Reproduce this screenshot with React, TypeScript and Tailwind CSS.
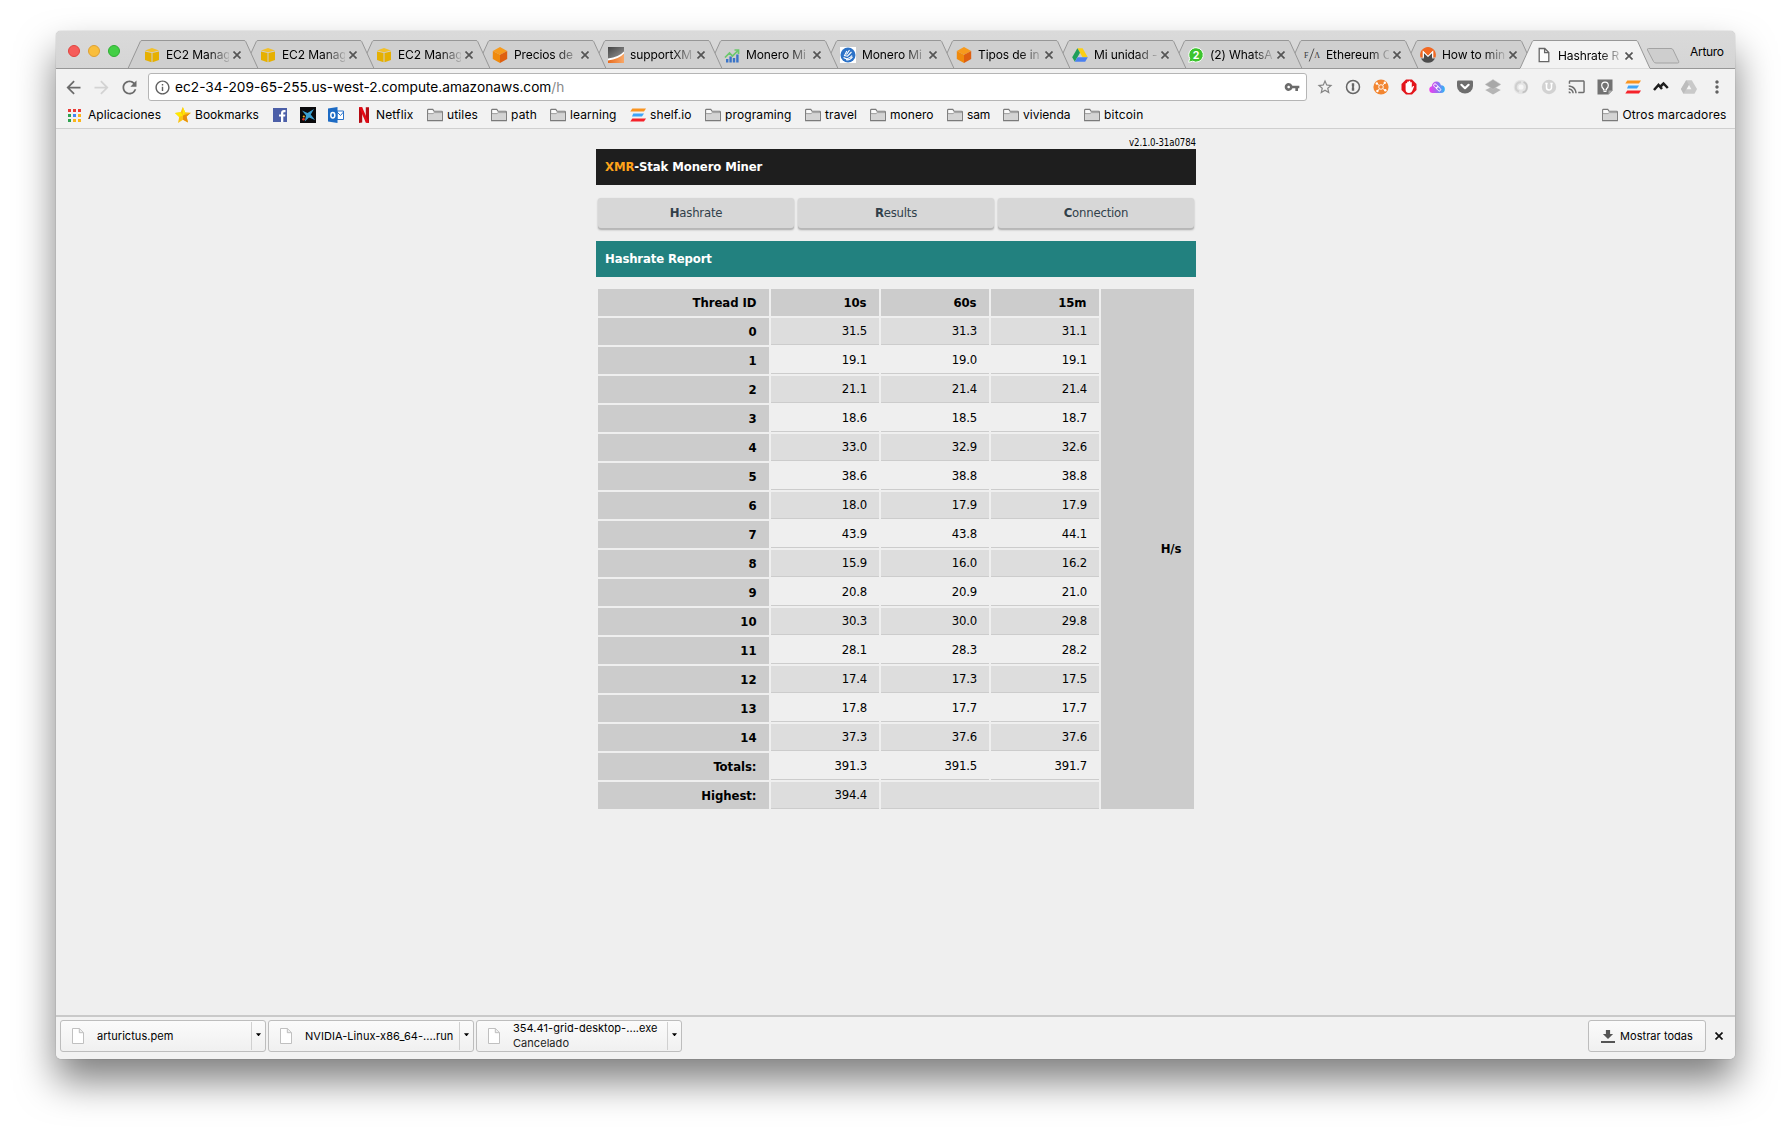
import type { ReactNode } from "react";
import {
  MdArrowBack,
  MdArrowForward,
  MdCast,
  MdInfoOutline,
  MdMoreVert,
  MdRefresh,
  MdStarBorder,
  MdVpnKey,
} from "react-icons/md";

/* ---------- favicons ---------- */

const AwsYellow = () => (
  <svg viewBox="0 0 16 16" className="size-4">
    <path d="M1 3.6 8 .9l7 2.7-7 1.7z" fill="#f2c02a" />
    <path d="M1 4.4 7.5 6v9.3L1 13z" fill="#e6b000" />
    <path d="M15 4.4 8.5 6v9.3L15 13z" fill="#e6b000" />
  </svg>
);

const AwsOrange = () => (
  <svg viewBox="0 0 16 16" className="size-4">
    <path d="M8 0l7.2 3.9L8 7.8.8 3.9z" fill="#f79a1c" />
    <path d="M.8 3.9 8 7.8V16L.8 12z" fill="#f08a0c" />
    <path d="M15.2 3.9 8 7.8V16l7.2-4z" fill="#df6010" />
  </svg>
);

const SupportXmr = () => (
  <svg viewBox="0 0 16 16" className="size-4">
    <defs>
      <linearGradient id="sx" x1="0" y1="0" x2="1" y2="1">
        <stop offset="0" stopColor="#444" />
        <stop offset="1" stopColor="#999" />
      </linearGradient>
      <linearGradient id="so" x1="0" y1="0" x2="1" y2="0">
        <stop offset="0" stopColor="#e86a1c" />
        <stop offset="1" stopColor="#f8a868" />
      </linearGradient>
    </defs>
    <path d="M0 0h16v16H0z" fill="#fff" />
    <path d="M0 0h16v4.500Q11 10 0 11.500z" fill="url(#sx)" />
    <path d="M16 6.500V16H0v-2.600Q11 12 16 6.500z" fill="url(#so)" />
  </svg>
);

const ChartIcon = () => (
  <svg viewBox="0 0 16 16" className="size-4">
    <path d="M2 12h2.400v3.500H2zM5.400 9.500h2.400v6H5.400zM8.800 11h2.400v4.500H8.800zM12.200 7.500h2.400v8h-2.400z" fill="#3a74c8" />
    <path d="M1 10.500 5.500 6l3 3L14 3.500M10.500 3H14.500v4" fill="none" stroke="#6cc86c" strokeWidth="1.700" />
  </svg>
);

const BlueCircle = () => (
  <svg viewBox="0 0 16 16" className="size-4">
    <path d="M0 0h16v16H0z" fill="#fff" />
    <circle cx="8" cy="8" r="7.500" fill="#2c72c7" />
    <path d="M9.500 3 6.500 7.500M6.800 4 4.500 8.500l3 .7L11.500 5M3.500 10.500c3 2 6 1.500 8.500-2M6 12.800c3 .5 5-.5 6.500-3" fill="none" stroke="#fff" strokeWidth="1.100" />
  </svg>
);

const DriveIcon = () => (
  <svg viewBox="0 0 16 16" className="size-4">
    <path d="M5.400 1.300h5.200l5.200 8.900h-5.200z" fill="#fbcf14" />
    <path d="M5.400 1.300 8 5.800 2.800 14.700.2 10.200z" fill="#1f9f5b" />
    <path d="M5.500 10.200h10.300l-2.600 4.500H2.800z" fill="#4a80f0" />
  </svg>
);

const WhatsApp = () => (
  <svg viewBox="0 0 16 16" className="size-4">
    <path d="M8 .7a7.200 7.200 0 1 1-3.400 13.500L.6 15.300l1.100-3.900A7.200 7.200 0 0 1 8 .7z" fill="#3cc42e" stroke="#fff" strokeWidth="1" />
    <text x="8" y="12" textAnchor="middle" fontSize="10.500" fontWeight="bold" fill="#fff" fontFamily="Inter, sans-serif">
      2
    </text>
  </svg>
);

const FaIcon = () => (
  <svg viewBox="0 0 16 16" className="size-4 overflow-visible">
    <text x="0" y="10.500" fontSize="8" fill="#333" fontFamily="Liberation Serif, serif">F</text>
    <text x="10.200" y="10.500" fontSize="8" fill="#333" fontFamily="Liberation Serif, serif">Λ</text>
    <path d="M5.200 14.500 10 1.500" stroke="#555" strokeWidth="1" />
  </svg>
);

const MoneroIcon = () => (
  <svg viewBox="0 0 16 16" className="size-4">
    <path d="M1 11.400h2.900V5.700L8 9.800l4.100-4.100v5.700H15A7.900 7.900 0 0 1 1 11.400z" fill="#4c4c4c" />
    <path d="M8 .1a7.900 7.900 0 0 0-7.500 10.300h2.300V3.500L8 8.700l5.200-5.200v6.900h2.300A7.900 7.900 0 0 0 8 .1z" fill="#f26822" />
    <path d="M2.800 10.400V3.500L8 8.700l5.200-5.200v6.900h-1.100V6L8 10.100 3.900 6v4.400z" fill="#fff" />
  </svg>
);

const PageIcon = () => (
  <svg viewBox="0 0 16 16" className="size-4">
    <path d="M3.200 1.500h5.600l4 4v9.200H3.200z M8.600 1.700v4h4" fill="#fdfdfd" stroke="#666" strokeWidth="1.300" />
  </svg>
);

/* ---------- tab strip ---------- */

type Tab = { icon: ReactNode; label: string; z: string; active?: boolean };

const tabs: Tab[] = [
  { icon: <AwsYellow />, label: "EC2 Manag", z: "z-[12]" },
  { icon: <AwsYellow />, label: "EC2 Manag", z: "z-[11]" },
  { icon: <AwsYellow />, label: "EC2 Manag", z: "z-[10]" },
  { icon: <AwsOrange />, label: "Precios de", z: "z-[9]" },
  { icon: <SupportXmr />, label: "supportXM", z: "z-[8]" },
  { icon: <ChartIcon />, label: "Monero Mi", z: "z-[7]" },
  { icon: <BlueCircle />, label: "Monero Mi", z: "z-[6]" },
  { icon: <AwsOrange />, label: "Tipos de in", z: "z-[5]" },
  { icon: <DriveIcon />, label: "Mi unidad -", z: "z-[4]" },
  { icon: <WhatsApp />, label: "(2) WhatsA", z: "z-[3]" },
  { icon: <FaIcon />, label: "Ethereum C", z: "z-[2]" },
  { icon: <MoneroIcon />, label: "How to min", z: "z-[1]" },
  { icon: <PageIcon />, label: "Hashrate R", z: "z-20", active: true },
];

function TabItem({ icon, label, z, active }: Tab) {
  return (
    <div className={`relative -mr-[14px] flex w-[130px] shrink-0 items-center pl-4 ${z} ${active ? "-mb-px h-[29px]" : "h-7"}`}>
      <svg viewBox="0 0 130 29" className="absolute top-0 left-0 h-[29px] w-[130px] overflow-visible">
        <path
          d="M0 28.500 12.300 1.500Q12.800 .5 14 .5H116Q117.200 .5 117.700 1.500L130 28.500"
          fill={active ? "#f2f2f2" : "#cfcfcf"}
          stroke="#979797"
        />
        {active ? <path d="M0 29h130" stroke="#f2f2f2" strokeWidth="1" /> : <path d="M-1 28.500h132" stroke="#979797" />}
      </svg>
      <span className="relative mt-px flex">{icon}</span>
      <span className="relative mt-0.5 ml-1.5 w-[63px] overflow-hidden text-[12px] leading-4 tracking-[-0.100px] whitespace-nowrap text-black [mask-image:linear-gradient(to_right,#000_42px,transparent_66px)]">
        {label}
      </span>
      <svg viewBox="0 0 8 8" className="relative mt-0.5 ml-1 size-2">
        <path d="M.5.5l7 7M7.500.5l-7 7" stroke="#555" strokeWidth="1.700" />
      </svg>
    </div>
  );
}

function TabStrip() {
  return (
    <div className="flex h-[38px] shrink-0 items-end border-b border-[#979797] bg-gradient-to-b from-[#dadada] to-[#d5d5d5]">
      <div className="flex gap-2 self-start pt-3.5 pl-3">
        <span className="size-3 rounded-full border border-[#e0443e] bg-[#f65c5a]" />
        <span className="size-3 rounded-full border border-[#dea032] bg-[#f9be3c]" />
        <span className="size-3 rounded-full border border-[#2fae33] bg-[#43cf45]" />
      </div>
      <div className="ml-2 flex items-end">
        {tabs.map((tab, i) => (
          <TabItem key={i} {...tab} />
        ))}
      </div>
      <svg viewBox="0 0 36 18" className="mb-[3px] ml-[10px] h-[18px] w-9 shrink-0">
        <path d="M2.500 1.500h22.500q1.500 0 2.200 1.500l5.500 11.500q.5 1.500-1 1.500H10q-1.800 0-2.500-1.500L1.500 3Q1 1.500 2.500 1.500z" fill="#cecece" stroke="#a3a3a3" />
      </svg>
      <span className="mb-2 ml-2 text-[12px] leading-4 tracking-[-0.300px] text-black">Arturo</span>
    </div>
  );
}

/* ---------- toolbar ---------- */

const OnePassword = () => (
  <svg viewBox="0 0 16 16" className="size-4">
    <circle cx="8" cy="8" r="6.500" fill="none" stroke="#666" strokeWidth="1.500" />
    <path d="M6.800 4.300h2.400v3l-.5.7.5.7v3H6.800v-3l.5-.7-.5-.7z" fill="#666" />
  </svg>
);

const OrangeNet = () => (
  <svg viewBox="0 0 16 16" className="size-4">
    <circle cx="8" cy="8" r="7.600" fill="#f28530" />
    <path d="M4 4.500 6.300 6.600M11.700 4 9.600 6.300M4.500 12 6.500 9.700M12.200 11.300 9.700 9.500" stroke="#fff" strokeWidth="1" />
    <g fill="#fff">
      <circle cx="3.800" cy="4.500" r="1.200" />
      <circle cx="11.800" cy="3.800" r="1.200" />
      <circle cx="4.400" cy="12" r="1.200" />
      <circle cx="12.300" cy="11.300" r="1.200" />
    </g>
    <circle cx="8" cy="8" r="2.300" fill="#f28530" stroke="#fff" strokeWidth=".9" />
  </svg>
);

const AdBlock = () => (
  <svg viewBox="0 0 16 16" className="size-4">
    <path d="M5 .5h6L15.500 5v6L11 15.500H5L.5 11V5z" fill="#e3151b" />
    <path d="M4.600 9V4.600a.8.8 0 0 1 1.500 0V3.200a.8.8 0 0 1 1.600 0v-.6a.8.8 0 0 1 1.600 0v.8a.8.8 0 0 1 1.500.1v5.200l1-1.500c.5-.6 1.500-.1 1.200.6L11.200 12c-.6 1.300-1.500 2-3.200 2-2.400 0-3.400-1.500-3.400-3.500z" fill="#fff" />
  </svg>
);

const CloudLink = () => (
  <svg viewBox="0 0 16 16" className="size-4">
    <defs>
      <linearGradient id="cl" x1="0" y1="0" x2="1" y2="0">
        <stop offset="0" stopColor="#f03cf0" />
        <stop offset=".5" stopColor="#a16cf0" />
        <stop offset="1" stopColor="#28b8f6" />
      </linearGradient>
    </defs>
    <path d="M3.500 14a3.400 3.400 0 0 1-.6-6.700A4.600 4.600 0 0 1 7.500 2.500a4.700 4.700 0 0 1 4.400 3.700A3.900 3.900 0 0 1 12 14z" fill="url(#cl)" />
    <g fill="none" stroke="#fff" strokeWidth=".9">
      <rect x="4.300" y="5.600" width="5" height="2.800" rx="1.400" transform="rotate(45 6.800 7)" />
      <rect x="7" y="8.400" width="5" height="2.800" rx="1.400" transform="rotate(45 9.500 9.800)" />
    </g>
  </svg>
);

const Pocket = () => (
  <svg viewBox="0 0 16 16" className="size-4">
    <path d="M1.300 1.500h13.400q1.300 0 1.300 1.300V7A8 7.500 0 0 1 0 7V2.800Q0 1.500 1.300 1.500z" fill="#6e6e6e" />
    <path d="M4.400 5.800 8 9.200l3.600-3.400" fill="none" stroke="#fff" strokeWidth="2.200" strokeLinecap="round" strokeLinejoin="round" />
  </svg>
);

const Layers = () => (
  <svg viewBox="0 0 16 16" className="size-4">
    <path d="M8 7.500 15.800 11 8 15.500.2 11z" fill="#b5b5b5" />
    <path d="M8 .5 15.800 5.400 8 10.300.2 5.400z" fill="#a8a8a8" stroke="#c4c4c4" strokeWidth=".5" />
  </svg>
);

const Swirl = () => (
  <svg viewBox="0 0 16 16" className="size-4">
    <circle cx="8" cy="8" r="7.300" fill="#e4e4e4" />
    <path d="M8 3.200A4.800 4.800 0 0 0 6 12.500" fill="none" stroke="#cfcfcf" strokeWidth="2" />
    <path d="M9.500 13.500A5.500 5.500 0 0 0 10.500 3" fill="none" stroke="#c2c2c2" strokeWidth="1.700" />
    <circle cx="8" cy="8" r="2.600" fill="#f6f6f6" />
  </svg>
);

const UCircle = () => (
  <svg viewBox="0 0 16 16" className="size-4">
    <circle cx="8" cy="8" r="7.200" fill="#d2d2d2" />
    <path d="M5.500 4.500v4a2.500 2.500 0 0 0 5 0v-4M4.300 4.500h2.400M9.300 4.500h2.400" fill="none" stroke="#fff" strokeWidth="1.500" />
  </svg>
);

const Bulb = () => (
  <svg viewBox="0 0 16 16" className="size-4">
    <path d="M.5.500h15v11L11.500 15.500H.5z" fill="#727272" />
    <path d="M15.500 11.500h-4v4z" fill="#aaa" />
    <path d="M6.500 9.800C5 8.800 4.700 7.600 4.700 6.500a3.300 3.300 0 0 1 6.600 0c0 1.100-.3 2.300-1.800 3.300v1.200h-3zM6.500 12.500h3" fill="none" stroke="#fff" strokeWidth="1.200" />
  </svg>
);

const Shelf = () => (
  <svg viewBox="0 0 16 16" className="size-4">
    <path d="M2.300 1.500H16l-2 3H.3z" fill="#fa9420" />
    <path d="M3.300 6.500H14l-2 3H2z" fill="#3fa4f8" />
    <path d="M2.300 11.500H16l-2 3H.3z" fill="#f5222a" />
  </svg>
);

const Peaks = () => (
  <svg viewBox="0 0 16 16" className="size-4">
    <path d="M1 11 5.500 6l3.500 4M7.500 7.500 10.500 4.500 14.800 9" fill="none" stroke="#1d1d1d" strokeWidth="2.500" />
  </svg>
);

const DriveGray = () => (
  <svg viewBox="0 0 16 16" className="size-4">
    <path d="M5.200 1.300h5.600L16 10l-2.500 4.700h-11L0 10z" fill="#c9c9c9" />
    <path d="M5.200 1.300 8 5.800 2.500 14.700 0 10z" fill="#bdbdbd" />
    <path d="M8 6l2.400 4.200H5.600z" fill="#f5f5f5" />
  </svg>
);

const extensions: ReactNode[] = [
  <MdStarBorder className="size-[18px] text-[#858585]" />,
  <OnePassword />,
  <OrangeNet />,
  <AdBlock />,
  <CloudLink />,
  <Pocket />,
  <Layers />,
  <Swirl />,
  <UCircle />,
  <MdCast className="size-[17.500px] text-[#6e6e6e]" />,
  <Bulb />,
  <Shelf />,
  <Peaks />,
  <DriveGray />,
  <MdMoreVert className="size-5 text-[#616161]" />,
];

function Toolbar() {
  return (
    <div className="flex h-9 shrink-0 items-center pl-[6.500px]">
      <div className="flex gap-[7px] text-[#6b6b6b]">
        <MdArrowBack className="size-[21px]" />
        <MdArrowForward className="size-[21px] text-[#d3d3d3]" />
        <MdRefresh className="size-[21px]" />
      </div>
      <div className="ml-[8.500px] flex h-7 w-[1159px] shrink-0 items-center rounded-[3px] border border-[#b5b5b5] bg-white pr-1.5 pl-[5px]">
        <MdInfoOutline className="size-[17px] text-[#5f5f5f]" />
        <span className="ml-1 flex-1 text-[13.700px] leading-5 text-black">
          ec2-34-209-65-255.us-west-2.compute.amazonaws.com<span className="text-[#8a8a8a]">/h</span>
        </span>
        <MdVpnKey className="size-4 text-[#6b6b6b]" />
      </div>
      <div className="ml-1 flex">
        {extensions.map((icon, i) => (
          <span key={i} className="flex w-7 items-center justify-center">
            {icon}
          </span>
        ))}
      </div>
    </div>
  );
}

/* ---------- bookmarks bar ---------- */

const Folder = () => (
  <svg viewBox="0 0 16 16" className="size-4">
    <path d="M.6 13.600V3.200q0-.8.800-.8h4.400l1.300 1.900h7.500q.8 0 .8.800v8.500z" fill="#fafafa" stroke="#7a7a7a" strokeWidth="1.100" />
    <path d="M1.100 6.700h5l1-1h7.800v7.400H1.100z" fill="#d4d4d4" />
    <path d="M1 6.600h5l1.200-1h7.800" fill="none" stroke="#8a8a8a" strokeWidth=".8" />
  </svg>
);

const AppsGrid = () => (
  <svg viewBox="0 0 13 13" className="size-[13px]">
    <path d="M0 0h3v3H0zM5 0h3v3H5zM10 0h3v3h-3z" fill="#ea3a35" />
    <path d="M0 5h3v3H0zM0 10h3v3H0z" fill="#2fa350" />
    <path d="M5 5h3v3H5z" fill="#4286f5" />
    <path d="M10 5h3v3h-3zM5 10h3v3H5zM10 10h3v3h-3z" fill="#fbb51b" />
  </svg>
);

const GoldStar = () => (
  <svg viewBox="0 0 16 16" className="size-4">
    <path d="M7.800 0l2.400 5.200 5.700.5-4.300 3.900 1.400 6L8 12.700 3 16l1.200-6L0 5.900l5.600-.6z" fill="#fbc412" />
    <path d="M7.800 0l2.400 5.200L8 8.500zM0 5.900l5.600-.6L8 8.500l-3.800 1.500z" fill="#ffe900" />
    <path d="M15.900 5.700l-4.300 3.900L8 8.500zM13 15.600L8 12.700V8.500l3.600 1.100z" fill="#e8900c" />
  </svg>
);

const Facebook = () => (
  <svg viewBox="0 0 14 14" className="size-3.5">
    <path d="M0 0h14v14H0z" fill="#4c5fa8" />
    <path d="M8 14V8.600H6V6.400h2V5c0-2 1.200-3 3-3h1.500v2.200h-1.200c-.8 0-1 .4-1 1v1.200h2.100l-.3 2.200h-1.800V14z" fill="#fff" />
  </svg>
);

const Caixa = () => (
  <svg viewBox="0 0 16 16" className="size-4">
    <path d="M0 0h16v16H0z" fill="#0a0a0c" />
    <path d="M2 3.500 7.500 6 14 2l-3.200 5.500L15 13 9 10.500 4.800 14.500 6 8.500z" fill="#3a9fd0" />
    <circle cx="3.800" cy="9.500" r="1.100" fill="#f2b01e" />
    <circle cx="3.500" cy="12.300" r="1.300" fill="#d8382a" />
  </svg>
);

const Outlook = () => (
  <svg viewBox="0 0 16 16" className="size-4">
    <path d="M9 4h6.500v8.500H9z" fill="#fff" stroke="#2a72c8" />
    <path d="M9 5l3.500 3.500L15.500 5" fill="none" stroke="#2a72c8" />
    <path d="M0 1.500 9.500 0v16L0 14.500z" fill="#1d6bc4" />
    <ellipse cx="4.800" cy="8.200" rx="2" ry="2.700" fill="none" stroke="#fff" strokeWidth="1.500" />
  </svg>
);

const NetflixIcon = () => (
  <svg viewBox="0 0 10 16" className="h-4 w-2.5">
    <path d="M0 .3h3.200V15.500L0 16zM6.800.3H10V16l-3.200-.5z" fill="#b50a12" />
    <path d="M0 .3h3.200L10 16l-3.200-.5z" fill="#e50914" />
  </svg>
);

const bookmarks: { icon: ReactNode; label?: string; cls: string }[] = [
  { icon: <AppsGrid />, label: "Aplicaciones", cls: "w-[107.500px] gap-[7.500px] tracking-[0.040px]" },
  { icon: <GoldStar />, label: "Bookmarks", cls: "w-[98px] gap-1 tracking-[0.030px]" },
  { icon: <Facebook />, cls: "w-[27px]" },
  { icon: <Caixa />, cls: "w-7" },
  { icon: <Outlook />, cls: "w-[31px]" },
  { icon: <NetflixIcon />, label: "Netflix", cls: "w-[68px] gap-[7px] tracking-[0.150px]" },
  { icon: <Folder />, label: "utiles", cls: "w-16 gap-1 tracking-[0.140px]" },
  { icon: <Folder />, label: "path", cls: "w-[59px] gap-1 tracking-[0.190px]" },
  { icon: <Folder />, label: "learning", cls: "w-20 gap-1 tracking-[0.070px]" },
  { icon: <Shelf />, label: "shelf.io", cls: "w-[75px] gap-1 tracking-[0.110px]" },
  { icon: <Folder />, label: "programing", cls: "w-[100px] gap-1 tracking-[0.120px]" },
  { icon: <Folder />, label: "travel", cls: "w-[65px] gap-1 tracking-[0.100px]" },
  { icon: <Folder />, label: "monero", cls: "w-[77px] gap-1 tracking-[0.030px]" },
  { icon: <Folder />, label: "sam", cls: "w-14 gap-1 tracking-[-0.100px]" },
  { icon: <Folder />, label: "vivienda", cls: "w-[81px] gap-1" },
  { icon: <Folder />, label: "bitcoin", cls: "gap-1 tracking-[0.200px]" },
];

function BookmarksBar() {
  return (
    <div className="flex h-6 shrink-0 items-center border-b border-[#cfcfcf] pr-[8.500px] pb-[3px] pl-[11.500px] text-[12px] leading-4 text-black">
      {bookmarks.map((b, i) => (
        <div key={i} className={`flex shrink-0 items-center ${b.cls}`}>
          {b.icon}
          {b.label && <span>{b.label}</span>}
        </div>
      ))}
      <div className="ml-auto flex items-center gap-1 tracking-[0.140px]">
        <Folder />
        <span>Otros marcadores</span>
      </div>
    </div>
  );
}

/* ---------- miner report ---------- */

const rows: [string, string, string][] = [
  ["31.5", "31.3", "31.1"],
  ["19.1", "19.0", "19.1"],
  ["21.1", "21.4", "21.4"],
  ["18.6", "18.5", "18.7"],
  ["33.0", "32.9", "32.6"],
  ["38.6", "38.8", "38.8"],
  ["18.0", "17.9", "17.9"],
  ["43.9", "43.8", "44.1"],
  ["15.9", "16.0", "16.2"],
  ["20.8", "20.9", "21.0"],
  ["30.3", "30.0", "29.8"],
  ["28.1", "28.3", "28.2"],
  ["17.4", "17.3", "17.5"],
  ["17.8", "17.7", "17.7"],
  ["37.3", "37.6", "37.6"],
];

const th = "h-[27px] bg-[#cccccc] p-0 pr-[12.500px] text-right font-bold tracking-[-0.050px]";
const td = "h-[27px] border-b border-[#cccccc] p-0 pr-3 text-right";

function Report() {
  return (
    <div className="ml-[540px] w-[600px] pt-2 font-['DejaVu_Sans_Condensed','DejaVu_Sans',sans-serif] text-[13px] leading-4 tracking-[-0.200px] text-black">
      <div className="h-3 text-right text-[9.600px] leading-3 tracking-[-0.100px]">v2.1.0-31a0784</div>
      <div className="flex h-9 items-center bg-[#1e1e1e] pl-[9px] font-bold tracking-[-0.120px] text-white">
        <span className="text-[#ffa31a]">XMR</span>-Stak Monero Miner
      </div>
      <div className="mt-[13px] flex gap-1 px-0.5">
        {["Hashrate", "Results", "Connection"].map((label) => (
          <button
            key={label}
            className="h-[31px] flex-1 rounded-[3px] bg-[#d7d7d7] pb-px text-[#31404a] shadow-[0_1px_2px_rgba(0,0,0,0.3),inset_0_-1px_0_rgba(0,0,0,0.15)]"
          >
            <b>{label[0]}</b>
            {label.slice(1)}
          </button>
        ))}
      </div>
      <div className="mt-3 flex h-9 items-center bg-[#22817f] pl-[9px] font-bold tracking-[-0.150px] text-white">Hashrate Report</div>
      <table className="mt-2.5 w-[600px] table-fixed border-separate border-spacing-0.5">
        <colgroup>
          <col className="w-[171px]" />
          <col className="w-[108px]" />
          <col className="w-[108px]" />
          <col className="w-[108px]" />
          <col className="w-[93px]" />
        </colgroup>
        <tbody>
          <tr>
            <th className={th}>Thread ID</th>
            <th className={th}>10s</th>
            <th className={th}>60s</th>
            <th className={th}>15m</th>
            <th className={th} rowSpan={18}>
              H/s
            </th>
          </tr>
          {rows.map((row, i) => (
            <tr key={i} className="odd:bg-[#efefef] even:bg-[#dddddd]">
              <th className={th}>{i}</th>
              {row.map((v, j) => (
                <td key={j} className={td}>
                  {v}
                </td>
              ))}
            </tr>
          ))}
          <tr>
            <th className={th}>Totals:</th>
            <td className={td}>391.3</td>
            <td className={td}>391.5</td>
            <td className={td}>391.7</td>
          </tr>
          <tr className="bg-[#dddddd]">
            <th className={th}>Highest:</th>
            <td className={td}>394.4</td>
            <td className={td} colSpan={2} />
          </tr>
        </tbody>
      </table>
    </div>
  );
}

/* ---------- download shelf ---------- */

const shelfButton =
  "flex h-8 items-center rounded-[3px] border border-[#bdbdbd] bg-gradient-to-b from-[#fbfbfb] to-[#f0f0f0]";

function Download({ name, note }: { name: string; note?: string }) {
  return (
    <div className={`${shelfButton} w-[206px]`}>
      <svg viewBox="0 0 12 16" className="ml-[11px] h-4 w-3 shrink-0">
        <path d="M.5.500h7l4 4v11H.5z" fill="#fff" stroke="#b9b9b9" strokeWidth=".9" />
        <path d="M7.300.700v4h4" fill="#eee" stroke="#b9b9b9" strokeWidth=".9" />
      </svg>
      <span className="ml-[13px] flex-1 text-[11px] leading-[15px] tracking-[0.050px] whitespace-nowrap text-black">
        {name}
        {note && <span className="block text-[#222]">{note}</span>}
      </span>
      <span className="flex h-7 w-3.5 items-center border-l border-[#d0d0d0] pb-[3px] pl-1">
        <svg viewBox="0 0 6 4" className="h-[3.500px] w-[5px]">
          <path d="M0 .3h6L3 4z" fill="#000" />
        </svg>
      </span>
    </div>
  );
}

function DownloadShelf() {
  return (
    <div className="flex h-11 shrink-0 items-start gap-0.5 border-t-2 border-[#c9c9c9] bg-[#f2f2f2] pt-[3px] pl-1">
      <Download name="arturictus.pem" />
      <Download name="NVIDIA-Linux-x86_64-....run" />
      <Download name="354.41-grid-desktop-....exe" note="Cancelado" />
      <button className={`${shelfButton} mr-[7px] ml-auto w-[118px] pl-3 text-[11px] tracking-[0.050px] text-black`}>
        <svg viewBox="0 0 14 13" className="mr-[5px] h-[13px] w-3.5">
          <path d="M4.900 0h4.200v4h3L7 9 1.900 4h3zM0 11h14v2H0z" fill="#555" />
        </svg>
        Mostrar todas
      </button>
      <svg viewBox="0 0 8 8" className="mt-3 mr-3 size-2">
        <path d="M.5.500l7 7M7.500.500l-7 7" stroke="#111" strokeWidth="1.700" />
      </svg>
    </div>
  );
}

export default function App() {
  return (
    <div className="h-[1139px] w-[1791px] overflow-hidden bg-white pt-[31px] pl-14 font-['Inter',sans-serif]">
      <div className="flex h-[1028px] w-[1679px] flex-col overflow-hidden rounded-[5px] bg-[#f2f2f2] shadow-[0_22px_38px_rgba(0,0,0,0.5),0_0_1px_rgba(0,0,0,0.5)]">
        <TabStrip />
        <Toolbar />
        <BookmarksBar />
        <main className="min-h-0 flex-1 bg-[#efefef]">
          <Report />
        </main>
        <DownloadShelf />
      </div>
    </div>
  );
}
